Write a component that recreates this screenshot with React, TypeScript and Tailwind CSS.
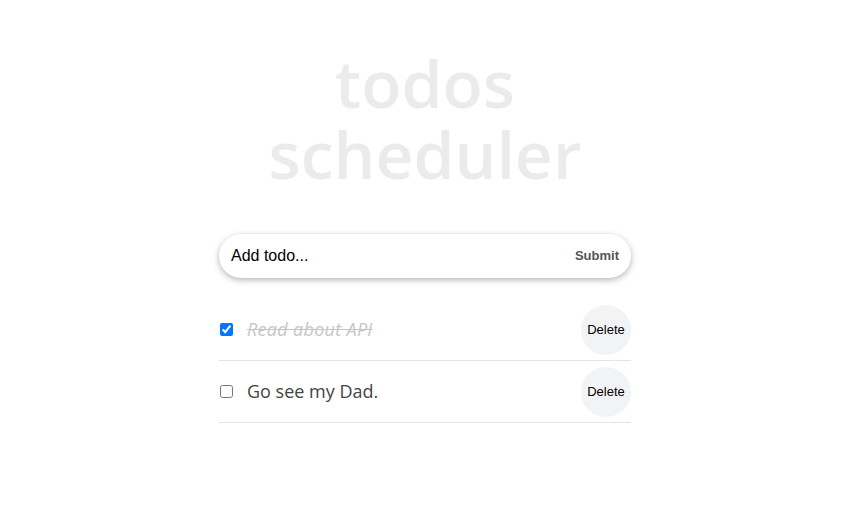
import React, { useState } from 'react';

type Todo = { id: number; text: string; done: boolean };

const App: React.FC = () => {
  const [todos, setTodos] = useState<Todo[]>([
    { id: 1, text: 'Read about API', done: true },
    { id: 2, text: 'Go see my Dad.', done: false },
  ]);
  const [value, setValue] = useState('');

  const toggle = (id: number) => {
    setTodos(prev => prev.map(t => (t.id === id ? { ...t, done: !t.done } : t)));
  };

  const remove = (id: number) => {
    setTodos(prev => prev.filter(t => t.id !== id));
  };

  return (
    <div className="min-h-screen bg-white flex flex-col items-center pt-[47px] pr-[12px]">
      <h1 className="text-center text-[66px] leading-[71px] font-semibold text-[#ebebeb] font-['Open_Sans',sans-serif]">
        todos
        <br />
        scheduler
      </h1>

      <div className="w-[412px] mt-[45px]">
        <form
          onSubmit={e => e.preventDefault()}
          className="flex items-center h-[44px] rounded-full bg-white shadow-[0_2px_6px_rgba(0,0,0,0.3)] pl-[12px] pr-[12px]"
        >
          <input
            value={value}
            onChange={e => setValue(e.target.value)}
            placeholder="Add todo..."
            className="flex-1 outline-none text-[16px] text-black placeholder:text-black font-['Liberation_Sans',Arial,sans-serif]"
          />
          <button className="text-[13px] font-bold text-[#555] font-['Liberation_Sans',Arial,sans-serif]">Submit</button>
        </form>

        <ul className="mt-[21px]">
          {todos.map(todo => (
            <li key={todo.id} className="flex items-center h-[62px] border-b border-[#e5e5e5]">
              <input
                type="checkbox"
                checked={todo.done}
                onChange={() => toggle(todo.id)}
                className="w-[13px] h-[13px] ml-[1px] mr-[14px] accent-[#0075ff]"
              />
              <span
                className={`flex-1 text-[18px] font-['Open_Sans',sans-serif] ${
                  todo.done ? 'italic line-through text-[#c6c6c6] tracking-[0.3px]' : 'text-[#444]'
                }`}
              >
                {todo.text}
              </span>
              <button
                onClick={() => remove(todo.id)}
                className="w-[50px] h-[50px] rounded-full bg-[#f2f3f5] text-[13px] text-black font-['Liberation_Sans',Arial,sans-serif]"
              >
                Delete
              </button>
            </li>
          ))}
        </ul>
      </div>
    </div>
  );
};

export default App;
